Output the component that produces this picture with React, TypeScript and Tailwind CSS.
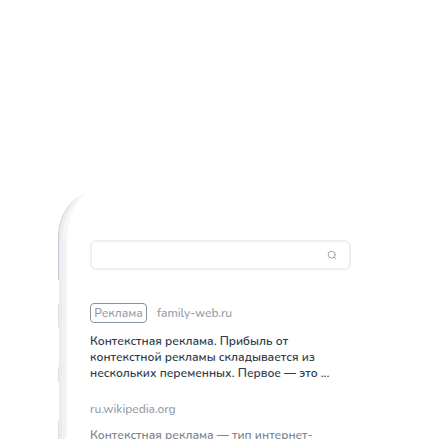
import React from 'react';

function PhoneFrame() {
  return (
    <svg className="absolute left-0 top-0" width="60" height="260" viewBox="0 0 60 260" fill="none" aria-hidden="true">
      <defs>
        <linearGradient id="corner" x1="0" y1="52" x2="31" y2="2" gradientUnits="userSpaceOnUse">
          <stop stopColor="#c6c4d8" />
          <stop offset="0.6" stopColor="#d2d1dc" />
          <stop offset="1" stopColor="#ffffff" />
        </linearGradient>
        <linearGradient id="band" x1="0" y1="0" x2="9" y2="0" gradientUnits="userSpaceOnUse">
          <stop stopColor="#e8e8ea" />
          <stop offset="0.35" stopColor="#ededee" />
          <stop offset="0.6" stopColor="#f1f1f2" />
          <stop offset="1" stopColor="#f6f6f6" />
        </linearGradient>
        <linearGradient id="bend" x1="2" y1="50" x2="30" y2="4" gradientUnits="userSpaceOnUse">
          <stop stopColor="#f4f4f5" />
          <stop offset="0.6" stopColor="#f8f8f9" />
          <stop offset="1" stopColor="#ffffff" />
        </linearGradient>
        <linearGradient id="bendEdge" x1="2" y1="50" x2="30" y2="4" gradientUnits="userSpaceOnUse">
          <stop stopColor="#ebebed" />
          <stop offset="0.6" stopColor="#ededef" />
          <stop offset="1" stopColor="#ffffff" />
        </linearGradient>
      </defs>
      <path d="M1 50V48C1 25 13 8 30 2L31 3C17 11 9 27 9 50Z" fill="url(#bend)" />
      <path d="M1 50H9V260H1Z" fill="url(#band)" />
      <path d="M2.5 50V48C2.5 28 13 11 29 3.5" stroke="url(#bendEdge)" strokeWidth="3" />
      <path d="M0.5 90V48C0.5 25 13 8 30 2" stroke="url(#corner)" strokeWidth="1" />
      <path d="M0.5 114V137M0.5 177V192M0.5 231V260" stroke="#dedee5" strokeWidth="1" />
    </svg>
  );
}

function SearchBox() {
  return (
    <form role="search" className="flex h-[30px] w-full max-w-[261px] items-center rounded-md border-2 border-[#eaf1f4] bg-white pr-3">
      <input type="text" aria-label="Поиск" className="h-full min-w-0 flex-1 bg-transparent px-2 text-xs outline-none" />
      <button type="submit" aria-label="Найти" className="text-[#9ba5b0]">
        <svg width="10" height="10" viewBox="0 0 10 10" fill="none" stroke="currentColor" strokeLinecap="round">
          <circle cx="4.7" cy="4.7" r="3.5" />
          <path d="M7.3 7.3L8.8 8.8" />
        </svg>
      </button>
    </form>
  );
}

export default function App() {
  return (
    <main className="h-screen overflow-hidden bg-white pl-[58px] pt-[190px] font-['Nunito','Open_Sans','Noto_Sans',sans-serif] text-xs leading-4">
      <section className="relative pl-8 pr-4 pt-[50px]">
        <PhoneFrame />
        <SearchBox />
        <article className="mt-[33px]">
          <div className="flex items-center gap-[10px] font-medium text-[#929ba9]">
            <span className="flex h-5 w-[57px] items-center justify-center rounded border border-[#8793a2]">Реклама</span>
            <a href="#family-web">family-web.ru</a>
          </div>
          <h2 className="mt-[10px] font-semibold text-[#303d4c]">
            Контекстная реклама. Прибыль от<br />
            контекстной рекламы складывается из<br />
            нескольких переменных. Первое — это ...
          </h2>
        </article>
        <article className="mt-5">
          <a href="#wikipedia" className="block font-medium text-[#929ba9]">ru.wikipedia.org</a>
          <h2 className="mt-[10px] font-semibold text-[#7d888f]">Контекстная реклама — тип интернет-</h2>
        </article>
      </section>
    </main>
  );
}
